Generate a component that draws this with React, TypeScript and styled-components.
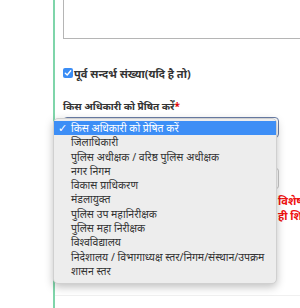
import React from 'react'
import styled, { createGlobalStyle } from 'styled-components'

const GlobalStyle = createGlobalStyle`
  html, body {
    margin: 0;
    padding: 0;
    background: #ffffff;
    overflow: hidden;
  }
  body {
    font-family: "Noto Sans", "Lato", "DejaVu Sans", sans-serif;
    color: #333333;
  }
`

const Page = styled.div`
  width: 300px;
  height: 308px;
  padding-left: 53px;
  box-sizing: border-box;
  overflow: hidden;
`

const Panel = styled.div`
  height: 308px;
  border-left: 2px solid #7fd5aa;
  padding-left: 8px;
  box-sizing: border-box;
  display: flex;
  flex-direction: column;
`

const NoteBox = styled.div`
  width: 300px;
  height: 39px;
  flex-shrink: 0;
  border: 1px solid #b5b5b5;
  border-top: none;
  box-sizing: border-box;
`

const CheckRow = styled.label`
  display: flex;
  align-items: center;
  gap: 1px;
  margin-top: 24px;
  height: 20px;
  font-size: 11px;
  font-weight: 700;
  color: #333333;
  white-space: nowrap;
`

const CheckBox = styled.span`
  width: 10px;
  height: 10px;
  border-radius: 2px;
  background: #3b8df5;
  display: flex;
  align-items: center;
  justify-content: center;
  flex-shrink: 0;
`

const FieldLabel = styled.div`
  margin-top: 15px;
  height: 16px;
  line-height: 16px;
  font-size: 10px;
  font-weight: 700;
  color: #333333;
  white-space: nowrap;
`

const Required = styled.span`
  color: #e00000;
`

const FieldRow = styled.div`
  display: flex;
  margin-top: 3px;
`

const FieldColumn = styled.div`
  position: relative;
  width: 216px;
  flex-shrink: 0;
  display: flex;
  flex-direction: column;
  gap: 30px;
`

const SelectBox = styled.div`
  height: 21px;
  border: 1px solid #6b7fa8;
  border-radius: 4px;
  box-sizing: border-box;
`

const InputBox = styled.div`
  height: 21px;
  border: 1px solid #c9c9c9;
  border-radius: 3px;
  box-sizing: border-box;
`

const Hint = styled.div`
  margin-top: 76px;
  margin-left: -1px;
  font-size: 11px;
  font-weight: 700;
  line-height: 15px;
  color: #ee1111;
  white-space: nowrap;
`

const Footer = styled.div`
  margin-top: auto;
  margin-left: -8px;
  height: 12px;
  border-top: 1px solid #f0f0f0;
`

const Menu = styled.ul`
  position: absolute;
  top: 1px;
  left: -10px;
  width: 224px;
  margin: 0;
  padding: 2px 0 5px;
  list-style: none;
  background: #ededed;
  border: 1px solid #d0d0d0;
  border-radius: 5px;
  box-shadow: 0 3px 8px rgba(0, 0, 0, 0.25);
  box-sizing: border-box;
`

const MenuItem = styled.li<{ $active?: boolean }>`
  position: relative;
  height: 14.3px;
  line-height: 14.3px;
  padding-left: 17px;
  font-size: 10.5px;
  white-space: nowrap;
  overflow: hidden;
  color: ${(p) => (p.$active ? '#ffffff' : '#333333')};
  background: ${(p) => (p.$active ? '#3d8ef6' : 'transparent')};
`

const Tick = styled.span`
  position: absolute;
  left: 4px;
  top: 0;
  font-size: 11px;
  font-weight: 700;
`

const options = [
  'किस अधिकारी को प्रेषित करें',
  'जिलाधिकारी',
  'पुलिस अधीक्षक / वरिष्ठ पुलिस अधीक्षक',
  'नगर निगम',
  'विकास प्राधिकरण',
  'मंडलायुक्त',
  'पुलिस उप महानिरीक्षक',
  'पुलिस महा निरीक्षक',
  'विश्वविद्यालय',
  'निदेशालय / विभागाध्यक्ष स्तर/निगम/संस्थान/उपक्रम',
  'शासन स्तर',
]

const App: React.FC = () => {
  return (
    <>
      <GlobalStyle />
      <Page>
        <Panel>
          <NoteBox />
          <CheckRow>
            <CheckBox>
              <svg width="8" height="8" viewBox="0 0 8 8">
                <path d="M1.3 4.2 L3.2 6 L6.7 1.8" fill="none" stroke="#fff" strokeWidth="1.4" strokeLinecap="round" strokeLinejoin="round" />
              </svg>
            </CheckBox>
            पूर्व सन्दर्भ संख्या(यदि है तो)
          </CheckRow>
          <FieldLabel>
            किस अधिकारी को प्रेषित करें<Required>*</Required>
          </FieldLabel>
          <FieldRow>
            <FieldColumn>
              <SelectBox />
              <InputBox />
              <Menu>
                {options.map((o, i) => (
                  <MenuItem key={o} $active={i === 0}>
                    {i === 0 && <Tick>✓</Tick>}
                    {o}
                  </MenuItem>
                ))}
              </Menu>
            </FieldColumn>
            <Hint>
              विशेष
              <br />
              ही शिकायत
            </Hint>
          </FieldRow>
          <Footer />
        </Panel>
      </Page>
    </>
  )
}

export default App
